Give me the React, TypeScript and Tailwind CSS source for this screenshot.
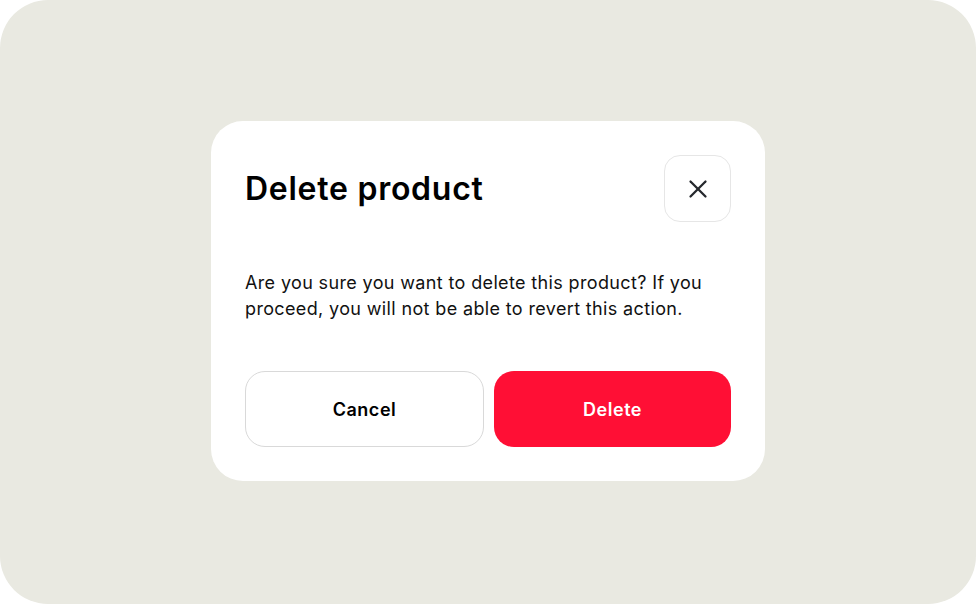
import { X } from "lucide-react"

export default function App() {
  return (
    <div className="bg-white w-[976px] h-[604px]" style={{ fontFamily: "Inter, 'Noto Sans', sans-serif" }}>
      <div className="w-full h-full rounded-[48px] bg-[#e9e9e1] flex items-center justify-center">
        <div className="w-[554px] bg-white rounded-[32px] p-[34px] -mt-[2px]">
          <div className="flex items-center justify-between">
            <h2 className="text-[32px] font-semibold text-black tracking-[0.023em]">Delete product</h2>
            <button className="w-[67px] h-[67px] rounded-[16px] border border-[#e6e6e6] flex items-center justify-center text-[#25282d]">
              <X size={30} strokeWidth={1.8} />
            </button>
          </div>
          <p className="mt-12 text-[18px] leading-[26px] text-[#111] tracking-[0.02em]">
            Are you sure you want to delete this product? If you proceed, you will not be able to revert this action.
          </p>
          <div className="mt-[49px] flex gap-[10px]">
            <button className="flex-1 h-[76px] rounded-[20px] border border-[#d9d9d9] bg-white text-[18px] font-semibold text-black tracking-[0.03em]">
              Cancel
            </button>
            <button className="flex-1 h-[76px] rounded-[20px] bg-[#ff0f35] text-[18px] font-semibold text-white tracking-[0.03em]">
              Delete
            </button>
          </div>
        </div>
      </div>
    </div>
  )
}
